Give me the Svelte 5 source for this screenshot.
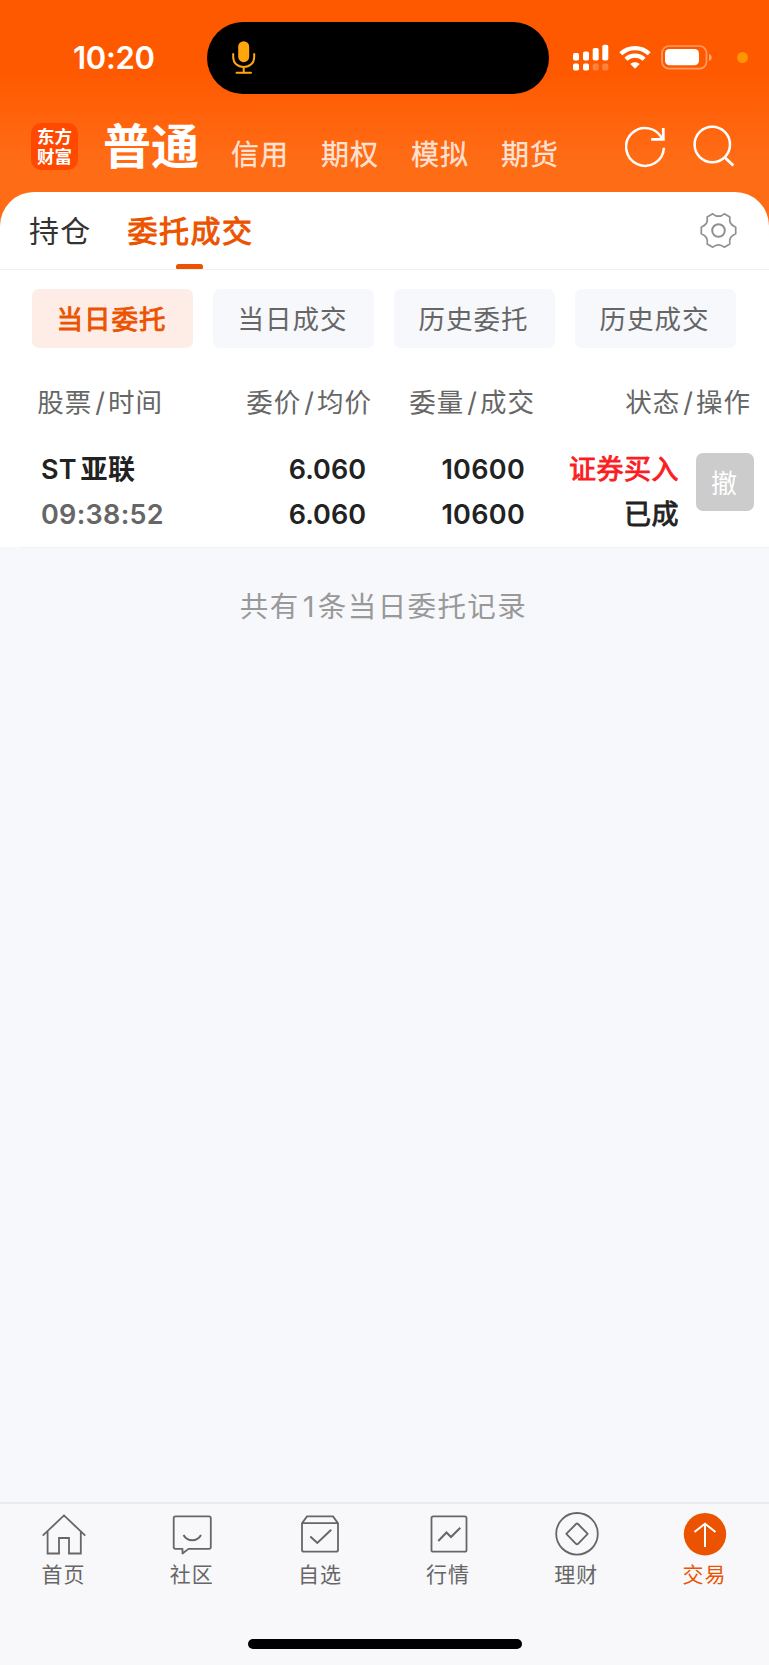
<script>
  const accounts = ['信用', '期权', '模拟', '期货'];
  const filters = ['当日委托', '当日成交', '历史委托', '历史成交'];
  const nav = [
    { id: 'home', label: '首页' },
    { id: 'community', label: '社区' },
    { id: 'watch', label: '自选' },
    { id: 'market', label: '行情' },
    { id: 'wealth', label: '理财' },
    { id: 'trade', label: '交易' }
  ];
  const orders = [
    { name: 'ST 亚联', time: '09:38:52', price: '6.060', avg: '6.060', qty: '10600', done: '10600', side: '证券买入', state: '已成' }
  ];
  let activeFilter = $state(0);
  let activeNav = $state('trade');
</script>

<div class="page">
  <div class="status">
    <span class="clock">10:20</span>
    <div class="island">
      <svg width="24" height="34" viewBox="0 0 24 34" fill="none" stroke="#ffa60d" stroke-width="2">
        <rect x="6.2" y="0.2" width="11" height="21" rx="5.5" fill="#ffa60d" stroke="none" />
        <path d="M1.2 13v3c0 6.200 4.500 10 10.500 10s10.500-3.800 10.500-10v-3M11.700 26v6M4.500 31.800h14.500" stroke-linecap="round" />
      </svg>
    </div>
    <div class="signals">
      <svg width="36" height="27" viewBox="0 0 36 27" fill="#fff">
        <rect x="0" y="9" width="6" height="7.600" rx="1.800" />
        <rect x="10" y="7.400" width="6" height="9.200" rx="1.800" />
        <rect x="19.700" y="4" width="6" height="12.600" rx="1.800" />
        <rect x="29.300" y="0.700" width="6" height="15.900" rx="1.800" />
        <rect x="0" y="19.500" width="6" height="7" rx="1.800" />
        <rect x="10" y="19.500" width="6" height="7" rx="1.800" />
        <rect x="19.700" y="19.500" width="6" height="7" rx="1.800" opacity=".25" />
        <rect x="29.300" y="19.500" width="6" height="7" rx="1.800" opacity=".25" />
      </svg>
      <svg class="wifi" width="32" height="24" viewBox="0 0 32 24" fill="none" stroke="#fff" stroke-width="4.300">
        <path d="M1.800 8.800C9.800 1.100 22.200 1.100 30.200 8.800" />
        <path d="M6.900 14.200C12 9.400 20 9.400 25.100 14.200" />
        <path d="M16 23.700l-4.700-4.800c2.700-2.300 6.700-2.300 9.400 0z" fill="#fff" stroke="none" />
      </svg>
      <svg class="battery" width="52" height="25" viewBox="0 0 52 25">
        <rect x="1" y="1" width="44.500" height="22.600" rx="7" fill="none" stroke="#fff" stroke-opacity=".4" stroke-width="1.700" />
        <rect x="4" y="4" width="34" height="16.300" rx="4.600" fill="#fff" />
        <path d="M48 9v7c1.500-.6 2.700-1.800 2.700-3.500S49.500 9.600 48 9z" fill="#fff" opacity=".45" />
      </svg>
      <i class="dot"></i>
    </div>
  </div>

  <header>
    <div class="logo">东方财富</div>
    <h1>普通</h1>
    <nav class="accounts">
      {#each accounts as a}<span>{a}</span>{/each}
    </nav>
    <svg class="refresh" width="42" height="44" viewBox="0 0 42 44" fill="none" stroke="#fff" stroke-width="2.500">
      <path d="M37.400 14.500A18.900 18.900 0 1 0 38.900 22.700" />
      <path d="M38.300 3v11.400H26.200" stroke-width="2.800" />
    </svg>
    <svg class="search" width="42" height="44" viewBox="0 0 42 44" fill="none" stroke="#fff" stroke-width="2.500">
      <circle cx="19.300" cy="19.500" r="17.700" />
      <path d="M31.300 32l9 8.500" stroke-width="2.800" />
    </svg>
  </header>

  <main>
    <div class="tabs">
      <span class="tab">持仓</span>
      <span class="tab on">委托成交</span>
      <svg class="gear" width="37" height="37" viewBox="-18.500 -18.500 37 37" fill="none" stroke="#909090" stroke-width="1.700" stroke-linejoin="round">
        <circle r="6.300" stroke-width="2" />
        <path d="M-5.800-16.700C-2-13.500 2-13.500 5.800-16.700L11.300-13.500C10.600-8 12-5.600 17.200-3.300V3.300C12 5.600 10.600 8 11.300 13.500L5.800 16.700C2 13.500-2 13.500-5.800 16.700L-11.300 13.500C-10.600 8-12 5.600-17.200 3.300V-3.300C-12-5.600-10.600-8-11.300-13.500Z" />
      </svg>
    </div>

    <div class="filters">
      {#each filters as f, i}
        <button class:on={i === activeFilter} onclick={() => (activeFilter = i)}>{f}</button>
      {/each}
    </div>

    <div class="grid head">
      <span>股票<b>/</b>时间</span><span>委价<b>/</b>均价</span><span>委量<b>/</b>成交</span><span>状态<b>/</b>操作</span>
    </div>

    {#each orders as o}
      <div class="grid row">
        <div class="cell name"><span class="stock">{o.name}</span><span class="time">{o.time}</span></div>
        <div class="cell price"><span>{o.price}</span><span>{o.avg}</span></div>
        <div class="cell"><span>{o.qty}</span><span>{o.done}</span></div>
        <div class="cell cjk"><span class="buy">{o.side}</span><span>{o.state}</span></div>
        <button class="cancel">撤</button>
      </div>
    {/each}
  </main>

  <p class="summary">共有<b>{orders.length}</b>条当日委托记录</p>

  <footer>
    <div class="navbar">
      {#each nav as n}
        <button class:on={n.id === activeNav} onclick={() => (activeNav = n.id)}>
          <svg width="46" height="46" viewBox="-23 -23 46 46" fill="none" stroke="#666" stroke-width="1.800" stroke-linejoin="round">
            {#if n.id === 'home'}
              <path d="M-21.300 1.700L0-18.600 21.300 1.700M-16.400-2.500V19.500H-5V4H5V19.500H16.800V-2.500" stroke-linejoin="miter" />
            {:else if n.id === 'community'}
              <path d="M-16.500-17.700h33.500q1.800 0 1.800 1.800v29q0 1.800-1.800 1.800H-3.500L-9.500 19.500V14.900H-16.500q-1.800 0-1.800-1.800v-29q0-1.800 1.800-1.800z" />
              <path d="M-8.500 1c4 7 13.500 7 17.500 0" stroke-width="2" />
            {:else if n.id === 'watch'}
              <path d="M-18-10.800L-13-17.600H13L18-10.800V15.700q0 2-2 2H-16q-2 0-2-2zM-18-10.800H18" />
              <path d="M-9.700 2.500L-2.700 9 11.200-4.200" stroke-width="2" stroke-linejoin="miter" />
            {:else if n.id === 'market'}
              <rect x="-17.500" y="-17.600" width="35" height="35.300" rx="1.800" />
              <path d="M-10.700 7L-2.500-1.500 2 3 11.300-6.200" stroke-width="2" stroke-linejoin="miter" />
            {:else if n.id === 'wealth'}
              <circle cy="-.200" r="20.800" />
              <path d="M-10.700-.2L-1-10Q0-11 1-10L10.700-.2 1 9.800Q0 10.800-1 9.800Z" />
            {:else}
              <circle cy=".200" r="21.200" fill="#ec5300" stroke="none" />
              <path d="M-10.500-2L0-10.300 10.500-2" stroke="#fff" stroke-width="2" stroke-linejoin="miter" />
              <path d="M0-10V13" stroke="#fff" stroke-width="2" />
            {/if}
          </svg>
          <span>{n.label}</span>
        </button>
      {/each}
    </div>
    <div class="homebar"></div>
  </footer>
</div>

<style>
  :global(body) { margin: 0; }
  .page {
    width: 769px;
    height: 1665px;
    display: flex;
    flex-direction: column;
    overflow: hidden;
    background: linear-gradient(#ff5900 0, #ff5900 72px, #ff6c16 160px, #ff6c16 240px) 0 0 / 100% 240px no-repeat, #f7f8fb;
    font-family: Inter, "Noto Sans CJK SC", sans-serif;
    color: #222;
  }
  button { border: 0; padding: 0; background: none; font: inherit; color: inherit; }
  svg { display: block; flex: none; }
  .status { height: 94px; display: flex; box-sizing: border-box; padding-top: 22px; }
  .clock {
    width: 134px; margin-left: 73px; line-height: 71px; font-size: 31px; font-weight: 600;
    color: #fff; flex: none; letter-spacing: -0.300px;
  }
  .island {
    width: 342px; height: 72px; border-radius: 36px; background: #000; box-sizing: border-box;
    padding: 19px 0 0 25px; flex: none;
  }
  .signals { display: flex; align-items: flex-start; padding: 22px 0 0 24px; }
  .wifi { margin: 1px 0 0 10px; }
  .battery { margin: 1px 0 0 10px; }
  .dot { width: 11px; height: 11px; border-radius: 50%; background: #ff9500; margin: 8px 0 0 24px; }

  header { height: 98px; display: flex; box-sizing: border-box; padding-left: 31px; color: #fff; font-family: "Noto Sans CJK SC", sans-serif; }
  .logo {
    width: 47px; height: 47px; border-radius: 10px; background: #ff4800; margin-top: 29px; box-sizing: border-box;
    padding: 3px 6px 0; font-size: 17.500px; font-weight: 700; line-height: 20px; flex: none; word-break: break-all;
  }
  h1 { margin: 17px 0 0 25px; width: 128px; font-size: 48px; line-height: 64px; font-weight: 700; flex: none; }
  .accounts { display: flex; margin-top: 38px; width: 397px; flex: none; }
  .accounts span { width: 90px; font-size: 28px; line-height: 42px; letter-spacing: 1px; -webkit-text-stroke: .300px; color: rgba(255, 255, 255, .8); flex: none; }
  .refresh { margin-top: 31px; margin-left: -3px; }
  .search { margin: 31px 0 0 26px; }

  main { background: #fff; border-radius: 34px 34px 0 0; height: 355px; flex: none; display: flex; flex-direction: column; }
  .tabs {
    height: 78px; box-sizing: border-box; border-bottom: 1px solid #f0f0f2; display: flex;
    padding: 0 32px 0 29px; font-family: "Noto Sans CJK SC", sans-serif; font-size: 30px; letter-spacing: 1.200px; line-height: 75px;
  }
  .tab { margin-right: 36px; color: #333; height: 77px; }
  .tab.on { position: relative; color: #ec5300; -webkit-text-stroke: 1px; letter-spacing: 1.500px; }
  .tab.on::after {
    content: ""; position: absolute; left: 50%; bottom: 0; width: 27px; height: 5px; margin-left: -14px;
    border-radius: 2.500px 2.500px 1px 1px; background: #ec5300;
  }
  .gear { margin: 20px 0 0 auto; }
  .filters { display: flex; gap: 20px; padding: 19px 32px 0; font-family: "Noto Sans CJK SC", sans-serif; }
  .filters button {
    width: 161px; height: 59px; border-radius: 7px; background: #f7f8fb; color: #666; font-size: 26.500px;
    letter-spacing: 1px; line-height: 57px; text-align: center; padding: 0 2px 2px 0;
  }
  .filters .on { background: #fdede6; color: #ec5300; -webkit-text-stroke: .900px; }

  .grid { display: grid; }
  .head {
    grid-template-columns: 163px 209px 163px 216px; margin-top: 31px; height: 44px; line-height: 44px;
    font-family: "Noto Sans CJK SC", sans-serif; font-size: 26.500px; letter-spacing: 1px; color: #666; text-align: right;
  }
  .head b { font: 400 27px/1 Inter, sans-serif; padding: 0 2px 0 3px; }
  .row {
    grid-template-columns: 175px 191px 159px 154px 58px; margin-top: 23px; font-size: 27px; font-weight: 600;
    letter-spacing: .300px; align-items: start;
  }
  .cell { display: flex; flex-direction: column; text-align: right; line-height: 45px; padding-top: 1px; }
  .cell span { height: 45px; white-space: pre; }
  .name { text-align: left; padding-left: 41px; }
  .stock { word-spacing: -3.500px; }
  .time { color: #666; }
  .price { letter-spacing: 0; }
  .cjk { font-family: "Noto Sans CJK SC", sans-serif; font-weight: 400; -webkit-text-stroke: .900px; padding-top: 0; margin-top: -1px; letter-spacing: .500px; }
  .buy { color: #fb1d22; }
  .cancel {
    margin: 7px 0 0 17px; width: 58px; height: 58px; border-radius: 7px; background: #ccc; color: #fff;
    font: 400 26px/57px "Noto Sans CJK SC", sans-serif; padding: 0 2px 1px 0;
  }
  .summary {
    margin: 0; padding-top: 35px; text-align: center; font: 400 28.500px/44px "Noto Sans CJK SC", sans-serif;
    letter-spacing: 1.400px; color: #999; border-top: 1px solid #f1f2f4; margin-left: 20px; padding-right: 22px;
  }
  .summary b { font: 400 29px/1 Inter, sans-serif; padding: 0 2px 0 3px; }

  footer { margin-top: auto; height: 163px; box-sizing: border-box; border-top: 2px solid #e9eaec; background: #f8f8fb; flex: none; }
  .navbar { display: grid; grid-template-columns: repeat(6, 1fr); }
  .navbar button { display: flex; flex-direction: column; align-items: center; padding-top: 7px; font: 400 21px/30px "Noto Sans CJK SC", sans-serif; letter-spacing: 1px; color: #666; }
  .navbar span { margin: 1px 1px 0 0; }
  .navbar .on { color: #ec5300; }
  .homebar { width: 274px; height: 10px; border-radius: 5px; background: #000; margin: 51px auto 0; }
</style>
